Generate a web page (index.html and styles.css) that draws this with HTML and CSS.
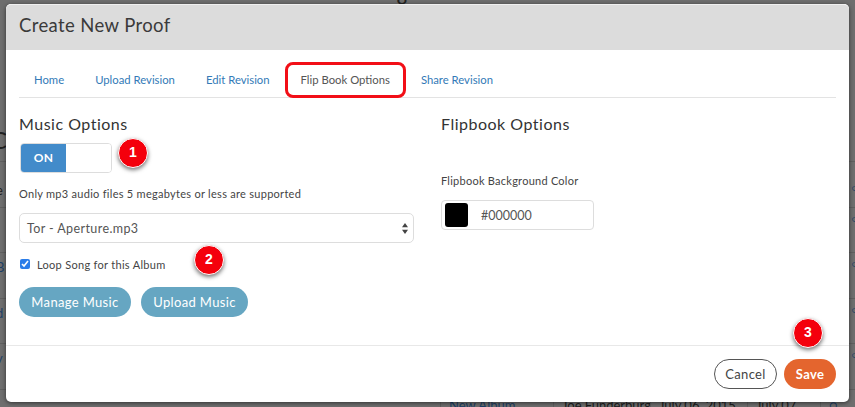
FILE: index.html
```html
<!DOCTYPE html>
<html lang="en">
<head>
<meta charset="utf-8">
<title>Create New Proof</title>
<link rel="stylesheet" href="styles.css">
</head>
<body>
<div class="page">
  <div class="page-title">g</div>
  <div class="rows">
    <div class="row row-heading"><span class="cut-big">C</span></div>
    <div class="row row-tall"><span class="cut">e</span><span class="mark">&#9675;</span></div>
    <div class="row"><span></span><span class="mark">&#9675;</span></div>
    <div class="row"><span class="cut link">B</span><span class="mark">&#9675;</span></div>
    <div class="row"><span class="cut link">d</span><span class="mark">&#9675;</span></div>
    <div class="row"><span class="cut link">v</span><span class="mark">&#9675;</span></div>
    <div class="row row-last">
      <span class="cell-first"></span>
      <span class="cell link">New Album</span>
      <span class="cell">Joe Funderburg</span>
      <span class="cell">July 06, 2015</span>
      <span class="cell">July 07,</span>
      <span class="cell cell-icon">&#9675;</span>
    </div>
  </div>
</div>

<div class="modal">
  <header class="modal-header">Create New Proof</header>
  <nav class="tabs">
    <a class="tab">Home</a>
    <a class="tab">Upload Revision</a>
    <a class="tab">Edit Revision</a>
    <a class="tab tab-active">Flip Book Options</a>
    <a class="tab">Share Revision</a>
  </nav>
  <main class="modal-body">
    <section class="col-music">
      <h2 class="section-title">Music Options</h2>
      <div class="toggle"><span class="toggle-on">ON</span><span class="toggle-off"></span></div>
      <p class="hint">Only mp3 audio files 5 megabytes or less are supported</p>
      <div class="select">
        <span>Tor - Aperture.mp3</span>
        <svg class="select-arrows" width="6" height="11" viewBox="0 0 6 11"><path d="M3 0 L6 4.2 H0 Z M3 11 L6 6.8 H0 Z" fill="#444"/></svg>
      </div>
      <label class="check-row"><input class="check" type="checkbox" checked><span>Loop Song for this Album</span></label>
      <div class="music-buttons">
        <button class="btn btn-blue btn-manage">Manage Music</button>
        <button class="btn btn-blue btn-upload">Upload Music</button>
      </div>
    </section>
    <section class="col-flip">
      <h2 class="section-title">Flipbook Options</h2>
      <p class="field-label">Flipbook Background Color</p>
      <div class="color-field"><span class="swatch"></span><span class="color-value">#000000</span></div>
    </section>
  </main>
  <footer class="modal-footer">
    <button class="btn btn-cancel">Cancel</button>
    <button class="btn btn-save">Save</button>
  </footer>
  <span class="badge badge-1">1</span>
  <span class="badge badge-2">2</span>
  <span class="badge badge-3">3</span>
</div>
</body>
</html>
```

FILE: styles.css
```css
* { box-sizing: border-box; }
html, body { margin: 0; height: 407px; overflow: hidden; }
body {
  position: relative;
  width: 855px;
  background: #6e6e6e;
  font-family: "Lato", "Noto Sans", sans-serif;
  color: #333;
}

/* dimmed page behind the dialog */
.page { height: 407px; color: #1d1d1d; }
.page-title { height: 116px; padding-left: 396px; font-size: 24px; line-height: 0; color: #222; }
.rows { display: flex; flex-direction: column; }
.row {
  height: 45.5px;
  border-top: 1px solid #5f5f5f;
  display: flex;
  justify-content: space-between;
  align-items: flex-start;
  font-size: 13px;
  line-height: 16px;
}
.row-heading { border-top: 0; height: 45px; }
.cut-big { font-size: 24px; line-height: 28px; margin: 10px 0 0 -9px; color: #222; }
.cut { margin: 6px 0 0 -4px; }
.link { color: #1d3f66; }
.mark { font-size: 8px; line-height: 10px; color: #1d3f66; margin: 6px -2px 0 0; }
.row-tall .cut { margin-top: 20px; }
.row-tall .mark { margin-top: 21px; }
.row-last {
  display: grid;
  grid-template-columns: 440px 113px 97px 97px 73px 35px;
  align-items: stretch;
  height: 19px;
}
.cell { border-left: 1px solid #5f5f5f; padding: 7px 0 0 8px; white-space: nowrap; }
.cell-icon { color: #1d3f66; }

/* dialog */
.modal {
  position: absolute;
  left: 6px;
  top: 4px;
  width: 843px;
  height: 398px;
  background: #fff;
  border-radius: 5px;
  box-shadow: 0 1px 4px rgba(0,0,0,.55);
  display: flex;
  flex-direction: column;
}
.modal-header {
  height: 46px;
  flex: none;
  background: #dcdcdc;
  border-top: 1px solid #f0f0f0;
  border-radius: 5px 5px 0 0;
  padding: 9px 0 0 13px;
  font-size: 18.5px;
  line-height: 22px;
  letter-spacing: .38px;
  color: #3a3a3a;
}
.tabs {
  flex: none;
  margin: 0 13px;
  height: 48px;
  border-bottom: 1px solid #e3e3e3;
  display: flex;
  align-items: flex-start;
  padding: 22px 0 0 15px;
  gap: 31px;
  font-size: 11.3px;
  line-height: 15px;
  color: #337ab7;
}
.tab-active { color: #555; position: relative; }
.tab-active::after {
  content: "";
  box-sizing: border-box;
  position: absolute;
  left: -16px;
  right: -16px;
  top: -10px;
  height: 36px;
  border: 3px solid #f20f17;
  border-radius: 8px;
}
.modal-body {
  flex: 1;
  display: grid;
  grid-template-columns: 395px 395px;
  column-gap: 27px;
  padding: 0 13px;
}
.section-title { margin: 16px 0 0; font-size: 16px; line-height: 20px; font-weight: 400; letter-spacing: .5px; color: #333; }
.toggle {
  margin: 9px 0 0 1px;
  width: 92px;
  height: 30px;
  display: flex;
  border: 1px solid #ddd;
  border-radius: 4px;
  overflow: hidden;
}
.toggle-on {
  width: 45px;
  background: #428bca;
  color: #fff;
  font-weight: 700;
  font-size: 12px;
  line-height: 28px;
  text-align: center;
  letter-spacing: .3px;
}
.toggle-off { flex: 1; background: #fff; }
.hint { margin: 13px 0 0; font-size: 11px; line-height: 16px; letter-spacing: .28px; color: #444; }
.select {
  margin-top: 11px;
  height: 30px;
  border: 1px solid #ddd;
  border-radius: 5px;
  padding: 0 5px 0 7px;
  display: flex;
  align-items: center;
  justify-content: space-between;
  font-size: 12.5px;
  letter-spacing: .4px;
  color: #555;
}
.check-row {
  margin-top: 13px;
  display: flex;
  align-items: center;
  gap: 7px;
  height: 16px;
  font-size: 11px;
  letter-spacing: .3px;
  color: #444;
}
.check { margin: 0 0 0 1px; width: 10px; height: 10px; accent-color: #2b7de9; }
.music-buttons { margin-top: 15px; display: flex; gap: 10px; }
.btn {
  height: 30px;
  border-radius: 15px;
  border: 0;
  padding: 0;
  font-family: inherit;
  font-size: 13px;
  letter-spacing: .35px;
}
.btn-blue { background: #66a6c2; color: #fff; }
.btn-manage { width: 112px; }
.btn-upload { width: 107px; }
.field-label { margin: 39px 0 0; font-size: 11px; line-height: 16px; letter-spacing: .25px; color: #444; }
.color-field {
  margin-top: 11px;
  width: 153px;
  height: 30px;
  border: 1px solid #ddd;
  border-radius: 4px;
  display: flex;
  align-items: center;
  padding-left: 3px;
}
.swatch { width: 23px; height: 24px; background: #000; border-radius: 3px; }
.color-value { margin-left: 13px; font-size: 12.5px; letter-spacing: 0; color: #555; }
.modal-footer {
  flex: none;
  height: 57px;
  border-top: 1px solid #e8e8e8;
  display: flex;
  justify-content: flex-end;
  gap: 7px;
  padding: 13px 13px 0 0;
}
.btn-cancel { width: 63px; background: #fff; border: 1px solid #555; color: #444; }
.btn-save { width: 52px; background: #e4652e; color: #fff; font-weight: 700; }

/* numbered annotations over the dialog */
.badge {
  position: absolute;
  width: 30px;
  height: 30px;
  border-radius: 50%;
  background: #f4000c;
  border: 1.5px solid #fff;
  color: #fff;
  font: 700 14px/27px "Liberation Sans", sans-serif;
  text-align: center;
  box-shadow: 0 2px 4px rgba(0,0,0,.55);
}
.badge-1 { left: 112px; top: 134px; }
.badge-2 { left: 188px; top: 241px; }
.badge-3 { left: 787px; top: 314px; }
```
